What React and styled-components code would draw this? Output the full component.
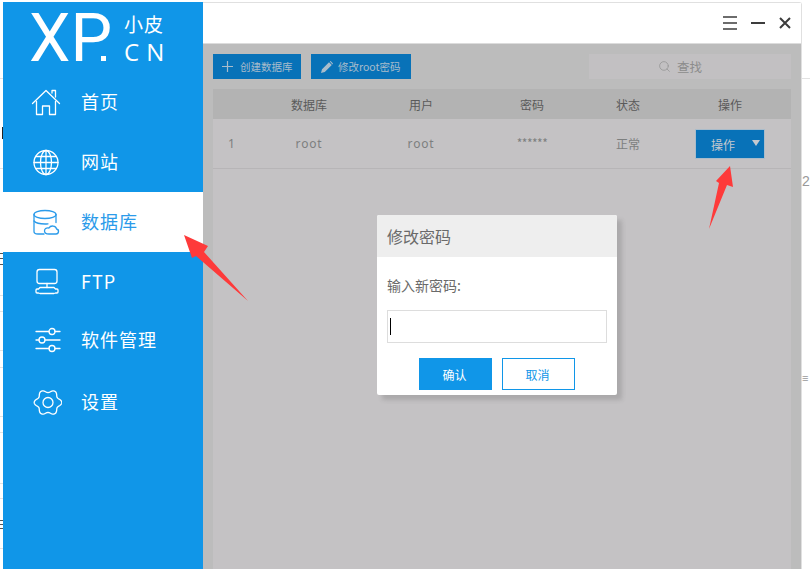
import styled, { createGlobalStyle } from "styled-components";
import { Search } from "lucide-react";

const CJK = `"Noto Sans CJK SC", "Noto Sans", sans-serif`;

const GlobalStyle = createGlobalStyle`
    html, body {
        margin: 0;
        padding: 0;
        background: #fff;
    }
    * {
        box-sizing: border-box;
    }
`;

const LIGHT_LINES = [78, 168, 218, 234, 295, 311, 350, 367, 416, 432, 483, 498, 548];
const DARK_LINES = [253, 258, 264, 520, 524, 528];
const gutterLine = (y, color) => `linear-gradient(${color}, ${color}) 0 ${y}px / 100% 1px no-repeat`;
const gutterLines = [
    ...LIGHT_LINES.map((y) => gutterLine(y, "#e2e2e2")),
    ...DARK_LINES.map((y) => gutterLine(y, "#555")),
    "linear-gradient(#222, #222) 2px 127px / 1px 12px no-repeat",
].join(", ");

const Page = styled.div`
    position: relative;
    display: flex;
    width: 810px;
    height: 569px;
    overflow: hidden;
    font-family: ${CJK};
`;

const LeftGutter = styled.div`
    flex: 0 0 3px;
    background: ${gutterLines};
`;

const RightGutter = styled.div`
    flex: 0 0 8px;
    display: flex;
    flex-direction: column;
    padding-top: 78px;
    color: #999;
    font-family: "Liberation Sans", sans-serif;
    line-height: 16px;
`;

const GutterRule = styled.div`
    height: 1px;
    background: #e2e2e2;
`;

const GutterGlyph = styled.div`
    margin-top: ${({ $gap }) => $gap}px;
    font-size: ${({ $size }) => $size}px;
`;

const Sidebar = styled.aside`
    flex: 0 0 200px;
    margin-top: 2px;
    background: #1096e8;
    display: flex;
    flex-direction: column;
`;

const Logo = styled.div`
    height: 70px;
    display: flex;
    color: #fff;
    padding-left: 26px;
`;

const LogoMark = styled.div`
    flex: none;
    height: 70px;
    padding-top: 4px;
    font-family: "Roboto", sans-serif;
    font-weight: 400;
    font-size: 66px;
    line-height: 66px;
    white-space: nowrap;
`;

const LogoDot = styled.span`
    display: inline-block;
    width: 5px;
    height: 5px;
    margin-left: -11px;
    background: #fff;
`;

const LogoSide = styled.div`
    display: flex;
    flex-direction: column;
    margin-left: 18px;
    padding-top: 10px;
`;

const LogoCn = styled.div`
    font-size: 19px;
    line-height: 24px;
    letter-spacing: 1px;
`;

const LogoLatin = styled.div`
    font-family: "Open Sans", sans-serif;
    font-size: 24px;
    line-height: 32px;
    letter-spacing: 7px;
`;

const NavItem = styled.div`
    height: 60px;
    display: flex;
    align-items: center;
    gap: 19px;
    padding-bottom: 2px;
    font-size: 18px;
    letter-spacing: 1px;
    color: ${({ $active }) => ($active ? "#2b9bea" : "#fff")};
    background: ${({ $active }) => ($active ? "#fff" : "transparent")};
    margin-left: ${({ $active }) => ($active ? "-3px" : "0")};
    padding-left: ${({ $active }) => ($active ? "31px" : "28px")};
`;

const NavIcon = styled.svg`
    flex: 0 0 31px;
    width: 31px;
    height: 31px;
    fill: none;
    stroke: currentColor;
    stroke-width: 1.3;
    stroke-linejoin: round;
    stroke-linecap: round;
`;

const NavLabel = styled.span`
    margin-bottom: ${({ $lift }) => $lift || 0}px;
`;

const Window = styled.main`
    position: relative;
    flex: 1;
    margin-top: 2px;
    display: flex;
    flex-direction: column;
    min-width: 0;
    border-right: 1px solid #e0e0e0;
    border-top: 1px solid #e0e0e0;
    border-top-right-radius: 3px;
`;

const TitleBar = styled.header`
    height: 41px;
    flex: none;
    display: flex;
    align-items: center;
    justify-content: flex-end;
    gap: 14px;
    padding-right: 10px;
    background: #fff;
    border-bottom: 1px solid #dcdcdc;
`;

const BarIcon = styled.svg`
    width: ${({ $w }) => $w}px;
    height: 14px;
    stroke: #3c3c3c;
    fill: none;
    stroke-width: ${({ $weight }) => $weight};
`;

const Content = styled.section`
    flex: 1;
    display: flex;
    flex-direction: column;
    background: #bcbcbc;
    padding: 10px 10px 0;
`;

const Toolbar = styled.div`
    display: flex;
    gap: 10px;
    height: 25px;
    flex: none;
`;

const ToolButton = styled.div`
    width: ${({ $w }) => $w}px;
    display: flex;
    align-items: center;
    gap: ${({ $gap }) => $gap}px;
    padding-left: ${({ $pad }) => $pad}px;
    background: #0872b8;
    color: #a9bccb;
    font-size: 10.5px;
    white-space: nowrap;
`;

const SearchBox = styled.div`
    margin-left: auto;
    width: 202px;
    padding-right: 20px;
    background: #c2c0c2;
    display: flex;
    align-items: center;
    justify-content: center;
    gap: 6px;
    color: #8c8c8c;
    font-size: 12.5px;
`;

const Table = styled.div`
    flex: 1;
    margin-top: 10px;
    background: #c4c2c4;
`;

const Row = styled.div`
    display: grid;
    grid-template-columns: 40px 112px 112px 110px 82px 1fr;
    align-items: center;
    justify-items: center;
    height: ${({ $head }) => ($head ? "30px" : "50px")};
    background: ${({ $head }) => ($head ? "#b3b3b3" : "transparent")};
    border-bottom: ${({ $head }) => ($head ? "none" : "1px solid #b7b5b7")};
    color: ${({ $head }) => ($head ? "#5a5a5a" : "#7d7f7f")};
    font-size: 12px;
`;

const IndexCell = styled.div`
    justify-self: start;
    padding-left: 15px;
    font-family: "Noto Sans", sans-serif;
`;

const RootCell = styled.div`
    font-family: "Noto Sans", sans-serif;
    letter-spacing: 0.8px;
`;

const MaskCell = styled.div`
    letter-spacing: -0.5px;
    margin-top: -2px;
`;

const ActionButton = styled.div`
    position: relative;
    width: 70px;
    height: 30px;
    display: flex;
    align-items: center;
    padding: 2px 0 0 15px;
    background: #0872b8;
    border: 1px solid #a9bccb;
    color: #c4c9cf;
`;

const Caret = styled.span`
    position: absolute;
    right: 4px;
    top: 10px;
    border-left: 4px solid transparent;
    border-right: 4px solid transparent;
    border-top: 6px solid #c4c9cf;
`;

const Dialog = styled.div`
    position: absolute;
    left: 174px;
    top: 212px;
    width: 240px;
    height: 180px;
    background: #fff;
    border-radius: 2px;
    box-shadow: 5px 5px 4px rgba(80, 80, 80, 0.22);
    overflow: hidden;
`;

const DialogTitle = styled.div`
    height: 42px;
    display: flex;
    align-items: center;
    padding-left: 10px;
    background: #eee;
    color: #6a6a6a;
    font-size: 16px;
`;

const DialogBody = styled.div`
    display: flex;
    flex-direction: column;
    padding: 19px 10px 0;
`;

const FieldLabel = styled.div`
    color: #6a6a6a;
    font-size: 14px;
    line-height: 18px;
`;

const Field = styled.div`
    margin-top: 16px;
    height: 33px;
    border: 1px solid #ddd;
    display: flex;
    align-items: center;
    padding-left: 2px;
`;

const TextCursor = styled.span`
    width: 1px;
    height: 17px;
    background: #000;
`;

const DialogActions = styled.div`
    display: flex;
    justify-content: center;
    gap: 10px;
    margin-top: 15px;
`;

const DialogButton = styled.div`
    width: 73px;
    height: 32px;
    display: flex;
    align-items: center;
    justify-content: center;
    padding-right: 2px;
    font-size: 12px;
    background: ${({ $primary }) => ($primary ? "#1096e8" : "#fff")};
    color: ${({ $primary }) => ($primary ? "#fff" : "#1096e8")};
    border: 1px solid #1096e8;
`;

const Arrows = styled.svg`
    position: absolute;
    inset: 0;
    width: 810px;
    height: 569px;
    pointer-events: none;
`;

const gearPath = Array.from({ length: 121 }, (_, i) => {
    const t = (i / 120) * Math.PI * 2;
    const r = 12.2 + 1.6 * Math.cos(6 * t);
    const x = 17 + r * Math.cos(t);
    const y = 16.5 + r * 0.94 * Math.sin(t);
    return `${i === 0 ? "M" : "L"}${x.toFixed(2)} ${y.toFixed(2)}`;
}).join(" ");

const ICONS = {
    home: (
        <>
            <path d="M1.5 17.5 15 4.5l13.5 13" />
            <path d="M21 7V4.500h3.500V11" />
            <path d="M5.500 15.500V28.500h6V20h7v8.500h6V15.500" />
        </>
    ),
    globe: (
        <>
            <circle cx="15" cy="16.500" r="12" />
            <ellipse cx="15" cy="16.500" rx="5.500" ry="12" />
            <path d="M15 4.500v24M3 16.500h24M4.700 10.500h20.600M4.700 22.500h20.600" />
        </>
    ),
    database: (
        <>
            <ellipse cx="14" cy="8.500" rx="11" ry="4" />
            <path d="M3 8.500v17c0 1.500 2 2.500 4 2.500h6" />
            <path d="M25 8.500v8" />
            <path d="M3 15c2 2.200 6 3 11 3 1 0 2-.1 3-.2" />
            <path d="M18 28h7c3 0 3.500-4.500.5-5-.5-3.500-6-4-7.500-1-3-.5-4.500 1-4.500 3 0 2 2 3 4.500 3z" />
        </>
    ),
    ftp: (
        <>
            <rect x="6" y="3.500" width="20" height="14" rx="2.500" />
            <path d="M16 17.500v4" />
            <path d="M9 21.500h14l1.500 1.500H26q1 0 1 1v2q0 1-1 1h-1.500L23 27.500H9L7.500 27H6q-1 0-1-1v-2q0-1 1-1h1.500z" />
        </>
    ),
    sliders: (
        <>
            <path d="M5 5.500h13M24 5.500h5M5 14h3M14 14h15M5 22.500h13M24 22.500h5" />
            <circle cx="21" cy="5.500" r="3" />
            <circle cx="11" cy="14" r="3" />
            <circle cx="21" cy="22.500" r="3" />
        </>
    ),
    gear: (
        <>
            <path d={gearPath} />
            <circle cx="17" cy="16.500" r="5" />
        </>
    ),
};

const NAV = [
    { id: "home", label: "首页" },
    { id: "globe", label: "网站" },
    { id: "database", label: "数据库", active: true },
    { id: "ftp", label: "FTP" },
    { id: "sliders", label: "软件管理", lift: 4 },
    { id: "gear", label: "设置" },
];

export default function App() {
    return (
        <Page>
            <GlobalStyle />
            <LeftGutter />
            <Sidebar>
                <Logo>
                    <LogoMark>
                        XP
                        <LogoDot />
                    </LogoMark>
                    <LogoSide>
                        <LogoCn>小皮</LogoCn>
                        <LogoLatin>CN</LogoLatin>
                    </LogoSide>
                </Logo>
                {NAV.map((item) => (
                    <NavItem key={item.id} $active={item.active}>
                        <NavIcon viewBox="0 0 31 31">{ICONS[item.id]}</NavIcon>
                        <NavLabel $lift={item.lift}>{item.label}</NavLabel>
                    </NavItem>
                ))}
            </Sidebar>
            <Window>
                <TitleBar>
                    <BarIcon $w={14} $weight={1.3} viewBox="0 0 14 14">
                        <path d="M0 1h14M0 7h14M0 13h14" />
                    </BarIcon>
                    <BarIcon $w={14} $weight={2} viewBox="0 0 14 14">
                        <path d="M0 7h14" />
                    </BarIcon>
                    <BarIcon $w={12} $weight={2} viewBox="0 0 12 14">
                        <path d="M1 2l10 10M11 2L1 12" />
                    </BarIcon>
                </TitleBar>
                <Content>
                    <Toolbar>
                        <ToolButton $w={88} $pad={9} $gap={7}>
                            <svg width="11" height="11" viewBox="0 0 11 11" stroke="#a9bccb" strokeWidth="1.200">
                                <path d="M5.500 0v11M0 5.500h11" />
                            </svg>
                            创建数据库
                        </ToolButton>
                        <ToolButton $w={100} $pad={10} $gap={5}>
                            <svg width="12" height="12" viewBox="0 0 12 12" fill="#a9bccb">
                                <path d="M0 12l1-3.800L8 1.200l2.800 2.800-7 7zM8.800.4l.8-.4 2.400 2.400-.6 1-2.600-3z" />
                            </svg>
                            修改root密码
                        </ToolButton>
                        <SearchBox>
                            <Search size={13} strokeWidth={1.500} color="#969696" />
                            查找
                        </SearchBox>
                    </Toolbar>
                    <Table>
                        <Row $head>
                            <span />
                            <span>数据库</span>
                            <span>用户</span>
                            <span>密码</span>
                            <span>状态</span>
                            <span>操作</span>
                        </Row>
                        <Row>
                            <IndexCell>1</IndexCell>
                            <RootCell>root</RootCell>
                            <RootCell>root</RootCell>
                            <MaskCell>******</MaskCell>
                            <span>正常</span>
                            <ActionButton>
                                操作
                                <Caret />
                            </ActionButton>
                        </Row>
                    </Table>
                </Content>
                <Dialog>
                    <DialogTitle>修改密码</DialogTitle>
                    <DialogBody>
                        <FieldLabel>输入新密码:</FieldLabel>
                        <Field>
                            <TextCursor />
                        </Field>
                        <DialogActions>
                            <DialogButton $primary>确认</DialogButton>
                            <DialogButton>取消</DialogButton>
                        </DialogActions>
                    </DialogBody>
                </Dialog>
            </Window>
            <RightGutter>
                <GutterRule />
                <GutterGlyph $gap={94} $size={14}>2</GutterGlyph>
                <GutterGlyph $gap={181} $size={11}>≡</GutterGlyph>
            </RightGutter>
            <Arrows viewBox="0 0 810 569">
                <polygon fill="#fe3a3a" points="184,235 208,246 204,252 248,301 196,256 192,258" />
                <polygon fill="#fe3a3a" points="730,166 733,187 727,185 709,229 719,183 716,181" />
            </Arrows>
        </Page>
    );
}
